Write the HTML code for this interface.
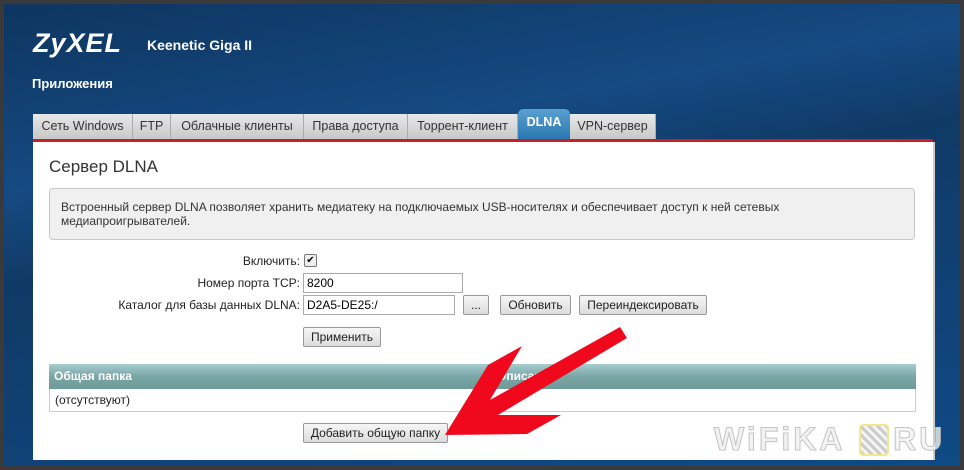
<!DOCTYPE html><html><head><meta charset="utf-8"><style>
body{margin:0;width:964px;height:470px;overflow:hidden;font-family:"Liberation Sans",sans-serif;}
#f{position:absolute;left:0;top:0;width:956px;height:462px;border:4px solid #3a3a3c;background:linear-gradient(170deg,#0e3560 0%,#154a82 30%,#103a66 45%,#0f4a86 100%);}
.a{position:absolute}
.tab{position:absolute;top:114px;height:25px;background:linear-gradient(#e8e8e8,#c8c8c8);border-right:1px solid #aaa;font-size:12.5px;color:#333;line-height:25px;text-align:center;box-sizing:border-box}
.btn{position:absolute;height:20px;border:1px solid #999;border-radius:2px;background:linear-gradient(#f6f6f6,#dcdcdc);font-size:12px;color:#222;line-height:19px;text-align:center;box-sizing:border-box}
.inp{position:absolute;height:20px;border:1px solid #aaa;background:#fff;font-size:12px;line-height:19px;padding-left:3px;box-sizing:border-box}
.lb{position:absolute;font-size:12px;color:#222;text-align:right;width:300px;left:0}
.wm{position:absolute;top:421px;font-size:32px;font-weight:bold;color:#f2f2f2;-webkit-text-stroke:1px #c4c4c4;letter-spacing:3px}
</style></head><body><div id="f"></div>
<div class="a" style="left:33px;top:28px;font-size:27px;font-weight:bold;font-style:italic;color:#fff;letter-spacing:1px">ZyXEL</div>
<div class="a" style="left:147px;top:37px;font-size:14px;font-weight:bold;color:#fff">Keenetic Giga II</div>
<div class="a" style="left:32px;top:76px;font-size:13px;font-weight:bold;color:#fff">Приложения</div>
<div class="tab" style="left:33px;width:100px">Сеть Windows</div>
<div class="tab" style="left:133px;width:38px">FTP</div>
<div class="tab" style="left:171px;width:133px">Облачные клиенты</div>
<div class="tab" style="left:304px;width:104px">Права доступа</div>
<div class="tab" style="left:408px;width:110px">Торрент-клиент</div>
<div class="tab" style="left:518px;top:109px;height:30px;width:52px;border-radius:5px 5px 0 0;background:linear-gradient(#5aa0d0,#2a78b0);color:#fff;font-weight:bold;line-height:26px;border:none">DLNA</div>
<div class="tab" style="left:570px;width:86px">VPN-сервер</div>
<div class="a" style="left:33px;top:139px;width:900px;height:3px;background:#c8202a"></div>
<div class="a" style="left:33px;top:142px;width:900px;height:318px;background:#fff;border-right:2px solid #ccc"></div>
<div class="a" style="left:49px;top:157px;font-size:17px;color:#333">Сервер DLNA</div>
<div class="a" style="left:49px;top:188px;width:866px;height:52px;background:#f0f0f0;border:1px solid #c8c8c8;border-radius:4px;box-sizing:border-box;padding:11px 11px;font-size:12px;color:#333;line-height:14px">Встроенный сервер DLNA позволяет хранить медиатеку на подключаемых USB-носителях и обеспечивает доступ к ней сетевых медиапроигрывателей.</div>
<div class="lb" style="top:254px">Включить:</div>
<div class="a" style="left:304px;top:254px;width:11px;height:11px;border:1px solid #777;border-radius:2px;background:#eee;font-size:10px;line-height:11px;text-align:center">✔</div>
<div class="lb" style="top:276px">Номер порта TCP:</div>
<div class="inp" style="left:303px;top:273px;width:160px">8200</div>
<div class="lb" style="top:298px">Каталог для базы данных DLNA:</div>
<div class="inp" style="left:303px;top:295px;width:152px">D2A5-DE25:/</div>
<div class="btn" style="left:463px;top:295px;width:26px">...</div>
<div class="btn" style="left:500px;top:295px;width:71px">Обновить</div>
<div class="btn" style="left:579px;top:295px;width:128px">Переиндексировать</div>
<div class="btn" style="left:303px;top:327px;width:78px">Применить</div>
<div class="a" style="left:49px;top:364px;width:867px;height:25px;background:linear-gradient(#a6cccf,#7aa6a6 50%,#6e9a9a);color:#fff;font-size:12px;font-weight:bold;line-height:25px;padding-left:5px;box-sizing:border-box">Общая папка<span style="position:absolute;left:448px">Описание</span></div>
<div class="a" style="left:49px;top:389px;width:867px;height:23px;border:1px solid #ccc;border-top:none;box-sizing:border-box;font-size:12px;line-height:23px;padding-left:5px;color:#222">(отсутствуют)</div>
<div class="btn" style="left:303px;top:423px;width:145px">Добавить общую папку</div>
<div class="wm" style="left:714px">WiFiKA</div>
<div class="a" style="left:859px;top:424px;width:26px;height:28px;border:2px solid #f3e88a;border-radius:4px;background:repeating-linear-gradient(45deg,#ccc 0 3px,#f5f5f5 3px 6px)"></div>
<div class="wm" style="left:893px;color:rgba(242,242,242,0.8)">RU</div>
<svg class="a" style="left:0;top:0" width="964" height="470"><polygon points="445,435 488,365 522,346 490,400 620,327 627,338 498,415 561,415 527,434" fill="#f0081c"/></svg>
</body></html>
